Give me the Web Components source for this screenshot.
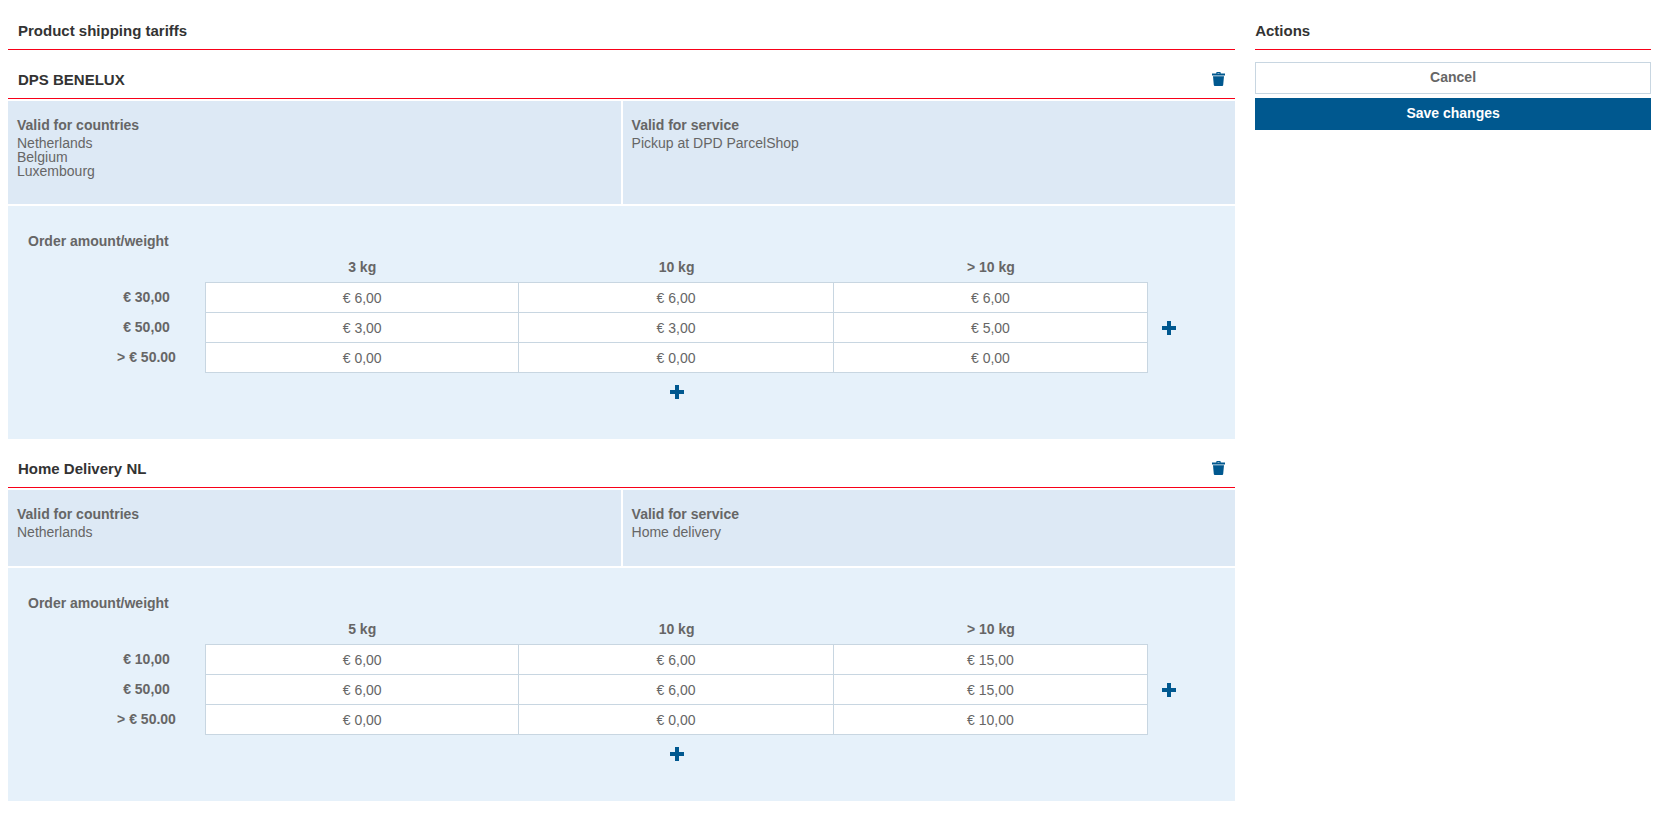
<!DOCTYPE html>
<html lang="en">
<head>
<meta charset="utf-8">
<title>Product shipping tariffs</title>
<style>
  :root {
    --text: #666;
    --heading: #333;
    --accent: #f80018;
    --primary: #00588f;
    --line: #c8d6e1;
    --info: #dde9f5;
    --panel: #e6f1fa;
  }
  body {
    margin: 0;
    background: #fff;
    color: var(--text);
    font: 14px/16px "Liberation Sans", Arial, sans-serif;
  }
</style>
</head>
<body>
<tariff-page>
  <section-heading level="1">Product shipping tariffs</section-heading>
  <tariff-card name="DPS BENELUX" weights="3 kg|10 kg|&gt; 10 kg"
    rows="€ 30,00|€ 6,00|€ 6,00|€ 6,00;€ 50,00|€ 3,00|€ 3,00|€ 5,00;&gt; € 50.00|€ 0,00|€ 0,00|€ 0,00">
    <div slot="countries">Netherlands</div>
    <div slot="countries">Belgium</div>
    <div slot="countries">Luxembourg</div>
    <div slot="service">Pickup at DPD ParcelShop</div>
  </tariff-card>
  <tariff-card name="Home Delivery NL" weights="5 kg|10 kg|&gt; 10 kg"
    rows="€ 10,00|€ 6,00|€ 6,00|€ 15,00;€ 50,00|€ 6,00|€ 6,00|€ 15,00;&gt; € 50.00|€ 0,00|€ 0,00|€ 10,00">
    <div slot="countries">Netherlands</div>
    <div slot="service">Home delivery</div>
  </tariff-card>
  <actions-panel slot="aside"></actions-panel>
</tariff-page>

<script>
const define = (name, render) => customElements.define(name, class extends HTMLElement {
  connectedCallback() {
    if (this.shadowRoot) return;
    this.attachShadow({ mode: "open" }).innerHTML = render(this);
  }
});

const escapeText = s => s.replace(/&/g, "&amp;").replace(/</g, "&lt;").replace(/>/g, "&gt;");

define("tariff-page", () => `
  <style>
    :host { display: grid; grid-template-columns: minmax(0, 31fr) minmax(0, 10fr); gap: 20px; padding: 1px 8px 12px; }
  </style>
  <main><slot></slot></main>
  <aside><slot name="aside"></slot></aside>`);

define("section-heading", el => {
  const level = el.getAttribute("level") || "2";
  return `
  <style>
    :host { display: flex; align-items: center; justify-content: space-between;
      padding: 19px 10px 9px; border-bottom: 1px solid var(--accent); }
    :host([flush]) { padding-left: 0; padding-right: 0; }
    h${level} { margin: 2px 0 0; font-size: 15px; line-height: 18px; font-weight: bold; color: var(--heading); }
  </style>
  <h${level}><slot></slot></h${level}><slot name="tool"></slot>`;
});

const icons = {
  trash: `<svg width="13" height="14" viewBox="0 0 13 14" fill="currentColor"><path fill-rule="evenodd" d="M0 1.600h4.300V.8Q4.300 0 5 0h3q.7 0 .7.8v.8H13v1.800H0zM5.500 1v.6h2V1z"/><path d="M1 4.300h11L11.200 13q-.1 1-1 1H2.800q-.9 0-1-1z"/></svg>`,
  plus: `<svg width="14" height="14" viewBox="0 0 14 14" fill="currentColor"><path d="M5 0h4v5h5v4H9v5H5V9H0V5h5z"/></svg>`
};

define("icon-button", el => `
  <style>
    :host { display: flex; }
    button { flex: 1; display: flex; align-items: center; justify-content: center; padding: 0;
      border: 0; background: none; color: var(--primary); cursor: pointer; }
    svg { display: block; }
  </style>
  <button type="button" aria-label="${el.getAttribute("label")}">${icons[el.getAttribute("icon")]}</button>`);

define("info-box", el => `
  <style>
    :host { display: block; box-sizing: border-box; min-height: 76px; padding: 16px 9px 26px; background: var(--info); }
    h3 { margin: 0 0 3px; font-size: 14px; line-height: 16px; }
    div { line-height: 14px; }
  </style>
  <h3>${el.getAttribute("title-text")}</h3>
  <div><slot></slot></div>`);

define("tariff-table", el => {
  const weights = el.getAttribute("weights").split("|").map(escapeText);
  const rows = el.getAttribute("rows").split(";").map(r => r.split("|").map(escapeText));
  return `
  <style>
    :host { display: grid; grid-template-columns: minmax(0, 1fr) 42px; padding: 27px 45px 28px 20px; background: var(--panel); }
    table { width: 100%; border-collapse: separate; border-spacing: 0; table-layout: fixed; }
    caption { text-align: left; font-weight: bold; line-height: 16px; }
    th, td { box-sizing: border-box; padding: 0; text-align: center; }
    .label { width: 177px; }
    thead th { height: 33px; padding-top: 3px; }
    tbody th { padding: 0 6px 2px 66px; height: 30px; }
    tbody td { height: 30px; background: #fff; border: solid var(--line); border-width: 0 1px 1px 0; }
    tbody th + td { border-left-width: 1px; }
    tbody tr:first-child td { border-top-width: 1px; height: 31px; }
    .add-column { align-self: end; height: 90px; }
    .add-row { margin-left: 178px; height: 38px; }
  </style>
  <table>
    <caption>Order amount/weight</caption>
    <thead><tr><td class="label"></td>${weights.map(w => `<th scope="col">${w}</th>`).join("")}</tr></thead>
    <tbody>${rows.map(([h, ...c]) => `<tr><th scope="row">${h}</th>${c.map(v => `<td>${v}</td>`).join("")}</tr>`).join("")}</tbody>
  </table>
  <icon-button class="add-column" icon="plus" label="Add weight"></icon-button>
  <icon-button class="add-row" icon="plus" label="Add order amount"></icon-button>`;
});

define("tariff-card", el => `
  <style>
    :host { display: block; }
    .info { display: grid; grid-template-columns: 1fr 1fr; gap: 2px; margin: 2px 0; }
  </style>
  <section-heading level="2">${escapeText(el.getAttribute("name"))}
    <icon-button slot="tool" icon="trash" label="Delete tariff"></icon-button>
  </section-heading>
  <div class="info">
    <info-box title-text="Valid for countries"><slot name="countries"></slot></info-box>
    <info-box title-text="Valid for service"><slot name="service"></slot></info-box>
  </div>
  <tariff-table weights="${escapeText(el.getAttribute("weights"))}" rows="${escapeText(el.getAttribute("rows"))}"></tariff-table>`);

define("actions-panel", () => `
  <style>
    :host { display: block; }
    .buttons { display: grid; gap: 4px; margin-top: 12px; }
    button { padding: 6px 8px 8px; border: 1px solid var(--line); background: #fff; color: var(--text);
      font: bold 14px/16px "Liberation Sans", Arial, sans-serif; cursor: pointer; }
    .primary { background: var(--primary); border-color: var(--primary); color: #fff; }
  </style>
  <section-heading level="2" flush>Actions</section-heading>
  <div class="buttons">
    <button type="button">Cancel</button>
    <button type="button" class="primary">Save changes</button>
  </div>`);
</script>
</body>
</html>
